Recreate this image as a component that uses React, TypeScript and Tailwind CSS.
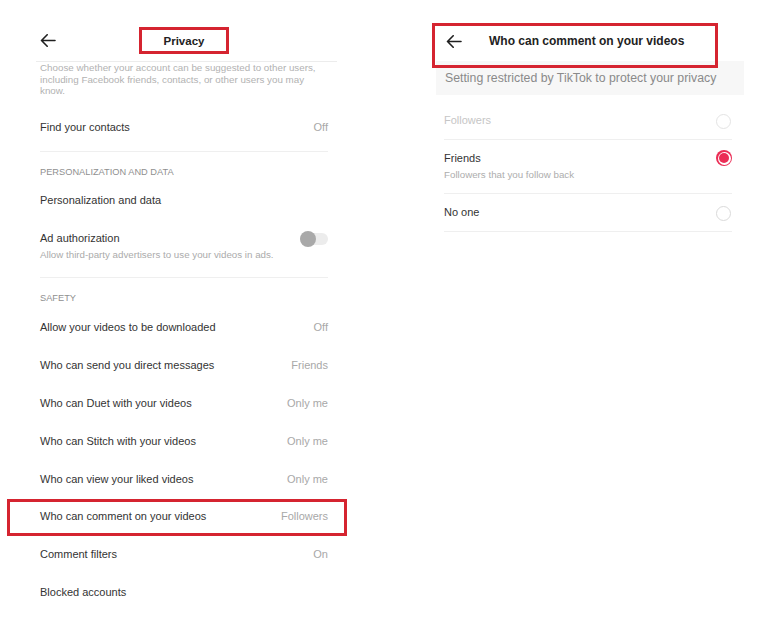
import React from "react";

const font = { fontFamily: '"Liberation Sans", Arial, sans-serif' };

function BackArrow() {
  return (
    <svg width="16" height="13" viewBox="0 0 16 13" fill="none" className="shrink-0">
      <path d="M15 6.5H1.5M7.2 0.8L1.5 6.5l5.7 5.7" stroke="#1f1f1f" strokeWidth="1.6" strokeLinecap="round" strokeLinejoin="round" />
    </svg>
  );
}

function Row({ label, value }: { label: string; value?: string }) {
  return (
    <div className="h-[37.8px] flex items-center justify-between text-[11px] leading-[14px]">
      <span className="text-[#333]">{label}</span>
      {value ? <span className="text-[#a8a8a8]">{value}</span> : null}
    </div>
  );
}

function Divider() {
  return <div className="h-px bg-[#efefef]" />;
}

function LeftPanel() {
  return (
    <div className="w-[384px] shrink-0 pt-[27px]">
      <div className="flex items-center h-[27px] pl-[40px]">
        <BackArrow />
        <div className="ml-[83px] w-[90px] h-[27px] border-[3px] border-[#d52430] flex items-center justify-center">
          <span className="text-[11.5px] font-bold text-[#222] translate-y-[1px]">Privacy</span>
        </div>
      </div>
      <div className="mt-[7px] ml-[36px] w-[301px] h-px bg-[#ececec]" />
      <div className="ml-[40px] w-[288px]">
        <div className="text-[9.8px] leading-[11.5px] text-[#b2b2b2]">
          <div>Choose whether your account can be suggested to other users,</div>
          <div>including Facebook friends, contacts, or other users you may</div>
          <div>know.</div>
        </div>
        <div className="mt-[12px]">
          <div className="h-[38px] flex items-center justify-between text-[11px]">
            <span className="text-[#333]">Find your contacts</span>
            <span className="text-[#a8a8a8]">Off</span>
          </div>
        </div>
        <div className="mt-[4px]">
          <Divider />
        </div>
        <div className="mt-[9px] h-[24px] flex items-center text-[9.25px] text-[#8f8f8f]">
          PERSONALIZATION AND DATA
        </div>
        <div className="h-[32px] flex items-center text-[11px] text-[#333]">Personalization and data</div>
        <div className="pt-[15px] pb-[15px]">
          <div className="flex items-center justify-between h-[14px]">
            <span className="text-[11px] text-[#333]">Ad authorization</span>
            <div className="relative w-[28px] h-[12px] rounded-full bg-[#ececec]">
              <div className="absolute left-0 top-[-2px] w-[16px] h-[16px] rounded-full bg-[#a9a9a9]" />
            </div>
          </div>
          <div className="mt-[4px] h-[12px] flex items-center text-[9.75px] text-[#ababab]">
            Allow third-party advertisers to use your videos in ads.
          </div>
        </div>
        <Divider />
        <div className="mt-[11px] h-[20px] flex items-center text-[9.25px] text-[#8f8f8f]">SAFETY</div>
        <Row label="Allow your videos to be downloaded" value="Off" />
        <Row label="Who can send you direct messages" value="Friends" />
        <Row label="Who can Duet with your videos" value="Only me" />
        <Row label="Who can Stitch with your videos" value="Only me" />
        <Row label="Who can view your liked videos" value="Only me" />
        <div className="relative">
          <Row label="Who can comment on your videos" value="Followers" />
          <div className="absolute left-[-33px] right-[-19px] top-[2px] bottom-[-1px] border-[3px] border-[#d52430]" />
        </div>
        <Row label="Comment filters" value="On" />
        <Row label="Blocked accounts" />
      </div>
    </div>
  );
}

function Radio({ checked, disabled }: { checked?: boolean; disabled?: boolean }) {
  if (checked) {
    return (
      <div className="w-[16px] h-[16px] rounded-full bg-[#eb2d55] flex items-center justify-center">
        <div className="w-[13px] h-[13px] rounded-full bg-white flex items-center justify-center">
          <div className="w-[10px] h-[10px] rounded-full bg-[#eb2d55]" />
        </div>
      </div>
    );
  }
  return <div className={`w-[15px] h-[15px] rounded-full border ${disabled ? "border-[#e4e4e4]" : "border-[#dadada]"}`} />;
}

function RightPanel() {
  return (
    <div className="w-[384px] shrink-0 pt-[27px] relative">
      <div className="relative">
        <div className="flex items-center h-[28px] pl-[62px]">
          <BackArrow />
          <span className="ml-[27px] text-[12px] font-bold text-[#222]">Who can comment on your videos</span>
        </div>
        <div className="absolute left-[48px] w-[286px] top-[-4px] h-[45px] border-[3px] border-[#d52430] z-10" />
      </div>
      <div className="mt-[6px] ml-[52px] w-[308px] h-[34px] bg-[#f7f7f7] flex items-center pl-[9px]">
        <span className="text-[12.3px] text-[#8a8a8a]">Setting restricted by TikTok to protect your privacy</span>
      </div>
      <div className="ml-[60px] w-[288px]">
        <div className="h-[44px] pt-[6px] flex items-center justify-between">
          <span className="text-[11px] text-[#c6c6c6]">Followers</span>
          <div className="mt-[3px] mr-[1px]">
            <Radio disabled />
          </div>
        </div>
        <Divider />
        <div className="pt-[11px] pb-[12px]">
          <div className="h-[14px] flex items-center justify-between">
            <span className="text-[11px] text-[#333]">Friends</span>
            <Radio checked />
          </div>
          <div className="mt-[4px] h-[12px] flex items-center text-[9.75px] text-[#adadad]">Followers that you follow back</div>
        </div>
        <Divider />
        <div className="h-[37px] flex items-center justify-between">
          <span className="text-[11px] text-[#333]">No one</span>
          <div className="mr-[1px] mt-[1px]">
            <Radio />
          </div>
        </div>
        <Divider />
      </div>
    </div>
  );
}

export default function App() {
  return (
    <div className="w-[768px] h-[626px] bg-white flex overflow-hidden" style={font}>
      <LeftPanel />
      <RightPanel />
    </div>
  );
}
